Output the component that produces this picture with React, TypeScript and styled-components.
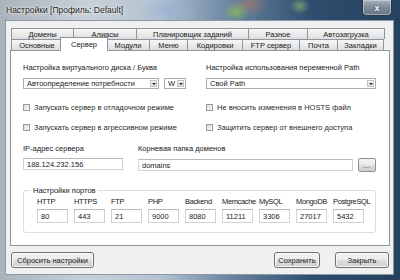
import * as React from 'react';
import styled, { createGlobalStyle, css } from 'styled-components';

const GlobalStyle = createGlobalStyle`
  html, body {
    margin: 0;
    padding: 0;
    background: #3b5470;
  }
  body {
    font-family: "Liberation Sans", Arial, sans-serif;
    font-size: 7.5px;
    color: #1a1a1a;
  }
`;

const Frame = styled.div`
  width: 400px;
  height: 280px;
  display: flex;
  flex-direction: column;
  box-sizing: border-box;
  background:
    linear-gradient(90deg, #aab3bc 0%, #c8d0d8 22%, #b3c2d1 40%, #6883a0 58%, #2f4d6e 78%, #26415f 100%);
  overflow: hidden;
`;

const TitleBar = styled.div`
  height: 20px;
  display: flex;
  align-items: center;
  justify-content: space-between;
  padding: 0 8px 0 6px;
  background:
    radial-gradient(ellipse 14px 10px at 236px 12px, rgba(140, 190, 90, 0.8), transparent),
    radial-gradient(ellipse 10px 8px at 300px 6px, rgba(150, 200, 110, 0.6), transparent),
    radial-gradient(ellipse 18px 12px at 250px 4px, rgba(200, 120, 90, 0.5), transparent),
    radial-gradient(ellipse 30px 14px at 170px 10px, rgba(150, 175, 210, 0.7), transparent);
`;

const Title = styled.span`
  font-size: 8.5px;
  color: #1c1c1c;
  text-shadow: 0 0 4px rgba(255, 255, 255, 0.9), 0 0 2px rgba(255, 255, 255, 0.9);
`;

const CloseButton = styled.div`
  width: 28px;
  height: 15px;
  margin-top: -4px;
  border: 1px solid #2e3a48;
  border-top: none;
  border-radius: 0 0 4px 4px;
  background: linear-gradient(180deg, #a7b2bd 0%, #7c8a99 50%, #66778a 100%);
  box-shadow: inset 0 0 0 1px rgba(255, 255, 255, 0.35);
  display: flex;
  align-items: center;
  justify-content: center;
  color: #fff;
  font-size: 9px;
  font-weight: bold;
  text-shadow: 0 0 2px #333;
`;

const Body = styled.div`
  flex: 1;
  margin: 0 6px 5px 5px;
  background: #f0f0f0;
  border: 1px solid #8c98a6;
  display: flex;
  flex-direction: column;
  padding: 7px 3px 6px 4px;
  gap: 6px;
`;

const TabControl = styled.div`
  display: flex;
  flex-direction: column;
`;

const TabRow = styled.div`
  display: flex;
  height: 11px;
  padding-left: 1px;
  align-items: flex-end;
`;

const Tab = styled.div<{ $w: number; $active?: boolean }>`
  width: ${(p) => p.$w}px;
  height: 11px;
  box-sizing: border-box;
  border: 1px solid #8f959e;
  border-bottom: none;
  margin-right: -1px;
  background: linear-gradient(180deg, #f6f6f6 0%, #ebebeb 50%, #dddddd 100%);
  display: flex;
  align-items: center;
  justify-content: center;
  white-space: nowrap;
  ${(p) =>
    p.$active &&
    css`
      height: 14px;
      margin: 0 -2px -1px -2px;
      width: ${p.$w + 3}px;
      background: #fff;
      position: relative;
      z-index: 2;
    `}
`;

const Panel = styled.div`
  height: 196px;
  box-sizing: border-box;
  background: #fff;
  border: 1px solid #8f959e;
  padding: 12px 13px 0 12px;
  display: flex;
  flex-direction: column;
`;

const TopGrid = styled.div`
  display: grid;
  grid-template-columns: 164px 170px;
  column-gap: 19px;
`;

const Column = styled.div`
  display: flex;
  flex-direction: column;
`;

const Label = styled.div`
  height: 9px;
  line-height: 9px;
  white-space: nowrap;
`;

const SelectRow = styled.div`
  display: flex;
  gap: 5px;
  margin-top: 6px;
`;

const Select = styled.div<{ $w: number }>`
  width: ${(p) => p.$w}px;
  height: 11px;
  box-sizing: border-box;
  border: 1px solid #acacac;
  background: #fff;
  display: flex;
  align-items: center;
  padding-left: 3px;
  padding-right: 1px;
  white-space: nowrap;
`;

const SelectText = styled.span`
  flex: 1;
  overflow: hidden;
`;

const Arrow = styled.div`
  width: 7px;
  height: 7px;
  box-sizing: border-box;
  border: 1px solid #c4c4c4;
  background: linear-gradient(180deg, #f4f4f4, #dedede);
  display: flex;
  align-items: center;
  justify-content: center;
  &::after {
    content: '';
    border-left: 2px solid transparent;
    border-right: 2px solid transparent;
    border-top: 2px solid #222;
  }
`;

const CheckRow = styled.div<{ $top: number }>`
  display: flex;
  align-items: center;
  gap: 4px;
  margin-top: ${(p) => p.$top}px;
  height: 9px;
  white-space: nowrap;
  color: #2a2a2a;
`;

const Box = styled.div`
  width: 7px;
  height: 7px;
  box-sizing: border-box;
  border: 1px solid #9a9a9a;
  background: linear-gradient(135deg, #dcdcdc, #f7f7f7);
`;

const IpGrid = styled.div`
  display: flex;
  gap: 15px;
  margin-top: 12px;
`;

const Field = styled.div<{ $w: number; $h?: number }>`
  width: ${(p) => p.$w}px;
  height: ${(p) => p.$h || 12}px;
  box-sizing: border-box;
  border: 1px solid #d2d2d2;
  border-top-color: #b9b9b9;
  background: #fff;
  display: flex;
  align-items: center;
  padding-left: 3px;
  white-space: nowrap;
`;

const FieldRow = styled.div`
  display: flex;
  align-items: center;
  gap: 5px;
  margin-top: 5px;
`;

const SmallButton = styled.div`
  width: 18px;
  height: 14px;
  box-sizing: border-box;
  border: 1px solid #8e8f8f;
  border-radius: 2px;
  background: linear-gradient(180deg, #f3f3f3 0%, #ebebeb 50%, #dddddd 51%, #cfcfcf 100%);
  display: flex;
  align-items: center;
  justify-content: center;
  font-size: 7px;
  letter-spacing: 0.5px;
`;

const GroupBox = styled.fieldset`
  margin: 14px 0 0 0;
  width: 353px;
  height: 47px;
  box-sizing: border-box;
  border: 1px solid #dcdcdc;
  border-radius: 3px;
  padding: 2px 0 0 13px;
  display: flex;
  gap: 6px;
`;

const Legend = styled.legend`
  padding: 0 2px;
  margin-left: -6px;
  line-height: 9px;
`;

const Port = styled.div`
  display: flex;
  flex-direction: column;
  gap: 3px;
  width: 31px;
`;

const PortLabel = styled.div`
  height: 9px;
  line-height: 9px;
  white-space: nowrap;
  letter-spacing: -0.35px;
`;

const Footer = styled.div`
  display: flex;
  align-items: center;
  gap: 15px;
  padding: 0 1px;
`;

const Button = styled.div<{ $w: number }>`
  width: ${(p) => p.$w}px;
  height: 16px;
  box-sizing: border-box;
  border: 1px solid #707070;
  border-radius: 3px;
  background: linear-gradient(180deg, #f2f2f2 0%, #ebebeb 50%, #dddddd 51%, #cfcfcf 100%);
  box-shadow: inset 0 0 0 1px rgba(255, 255, 255, 0.8);
  display: flex;
  align-items: center;
  justify-content: center;
  white-space: nowrap;
`;

const Spacer = styled.div`
  flex: 1;
`;

const row1 = [
  { t: 'Домены', w: 63 },
  { t: 'Алиасы', w: 64 },
  { t: 'Планировщик заданий', w: 113 },
  { t: 'Разное', w: 60 },
  { t: 'Автозагрузка', w: 78 },
];

const row2 = [
  { t: 'Основные', w: 52 },
  { t: 'Сервер', w: 45, active: true },
  { t: 'Модули', w: 44 },
  { t: 'Меню', w: 39 },
  { t: 'Кодировки', w: 56 },
  { t: 'FTP сервер', w: 58 },
  { t: 'Почта', w: 39 },
  { t: 'Закладки', w: 47 },
];

const ports = [
  ['HTTP', '80'],
  ['HTTPS', '443'],
  ['FTP', '21'],
  ['PHP', '9000'],
  ['Backend', '8080'],
  ['Memcache', '11211'],
  ['MySQL', '3306'],
  ['MongoDB', '27017'],
  ['PostgreSQL', '5432'],
];

export default function App() {
  return (
    <>
      <GlobalStyle />
      <Frame>
        <TitleBar>
          <Title>Настройки [Профиль: Default]</Title>
          <CloseButton>x</CloseButton>
        </TitleBar>
        <Body>
          <TabControl>
            <TabRow>
              {row1.map((tab) => (
                <Tab key={tab.t} $w={tab.w}>{tab.t}</Tab>
              ))}
            </TabRow>
            <TabRow>
              {row2.map((tab) => (
                <Tab key={tab.t} $w={tab.w} $active={tab.active}>{tab.t}</Tab>
              ))}
            </TabRow>
            <Panel>
              <TopGrid>
                <Column>
                  <Label>Настройка виртуального диска / Буква</Label>
                  <SelectRow>
                    <Select $w={136}>
                      <SelectText>Автоопределение потребности</SelectText>
                      <Arrow />
                    </Select>
                    <Select $w={22}>
                      <SelectText>W</SelectText>
                      <Arrow />
                    </Select>
                  </SelectRow>
                  <CheckRow $top={14}>
                    <Box />
                    Запускать сервер в отладочном режиме
                  </CheckRow>
                  <CheckRow $top={11}>
                    <Box />
                    Запускать сервер в агрессивном режиме
                  </CheckRow>
                </Column>
                <Column>
                  <Label>Настройка использования переменной Path</Label>
                  <SelectRow>
                    <Select $w={170}>
                      <SelectText>Свой Path</SelectText>
                      <Arrow />
                    </Select>
                  </SelectRow>
                  <CheckRow $top={14}>
                    <Box />
                    Не вносить изменения в HOSTS файл
                  </CheckRow>
                  <CheckRow $top={11}>
                    <Box />
                    Защитить сервер от внешнего доступа
                  </CheckRow>
                </Column>
              </TopGrid>

              <IpGrid>
                <Column>
                  <Label>IP-адрес сервера</Label>
                  <FieldRow>
                    <Field $w={100}>188.124.232.156</Field>
                  </FieldRow>
                </Column>
                <Column>
                  <Label>Корневая папка доменов</Label>
                  <FieldRow>
                    <Field $w={215}>domains</Field>
                    <SmallButton>...</SmallButton>
                  </FieldRow>
                </Column>
              </IpGrid>

              <GroupBox>
                <Legend>Настройки портов</Legend>
                {ports.map(([name, value]) => (
                  <Port key={name}>
                    <PortLabel>{name}</PortLabel>
                    <Field $w={31} $h={14}>{value}</Field>
                  </Port>
                ))}
              </GroupBox>
            </Panel>
          </TabControl>

          <Footer>
            <Button $w={83}>Сбросить настройки</Button>
            <Spacer />
            <Button $w={46}>Сохранить</Button>
            <Button $w={54}>Закрыть</Button>
          </Footer>
        </Body>
      </Frame>
    </>
  );
}
